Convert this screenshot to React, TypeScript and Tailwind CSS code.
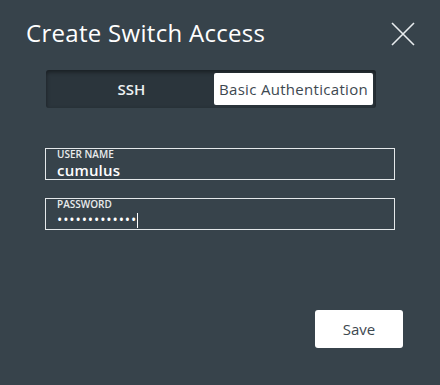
export default function App() {
  return (
    <div
      className="w-[440px] h-[385px] bg-[#37434b] text-white relative overflow-hidden"
      style={{ fontFamily: '"Open Sans", "DejaVu Sans", sans-serif' }}
    >
      {/* header */}
      <div className="flex items-start justify-between pl-[26px] pr-[25px] pt-[18px]">
        <h1 className="text-[24px] leading-[30px] font-normal tracking-[0.3px]">Create Switch Access</h1>
        <button className="w-[24px] h-[24px] mt-[4px]">
          <svg viewBox="0 0 24 24" width="24" height="24" fill="none" stroke="#e8ecee" strokeWidth="1.6">
            <path d="M1 1 L23 23 M23 1 L1 23" />
          </svg>
        </button>
      </div>

      {/* auth type toggle */}
      <div className="ml-[46px] mt-[22px] w-[330px] h-[38px] rounded-[3px] bg-[#2b353c] shadow-[inset_0_2px_4px_rgba(0,0,0,0.45)] flex items-center p-[3px]">
        <button className="flex-1 h-full text-[15px] font-semibold text-[#eef1f2]">SSH</button>
        <button className="w-[159px] h-full bg-white rounded-[2px] text-[15px] tracking-[0.3px] text-[#3d4850]">
          Basic Authentication
        </button>
      </div>

      {/* fields */}
      <div className="ml-[45px] mt-[40px] w-[350px] flex flex-col gap-[18px]">
        <div className="h-[32px] border-[1.5px] border-[#e4e8ea] px-[11px] flex flex-col gap-[4px]">
          <div className="text-[10px] leading-[10px] font-semibold text-[#e9eced]">USER NAME</div>
          <div className="text-[15px] leading-[14px] font-semibold tracking-[0.2px]">cumulus</div>
        </div>
        <div className="h-[32px] border-[1.5px] border-[#e4e8ea] px-[11px] flex flex-col gap-[4px]">
          <div className="text-[10px] leading-[10px] font-semibold text-[#e9eced]">PASSWORD</div>
          <div className="flex items-center h-[14px]">
            <span className="text-[14px] leading-[14px] tracking-[0.9px]">•••••••••••••</span>
            <span className="w-px h-[15px] bg-white" />
          </div>
        </div>
      </div>

      {/* footer */}
      <div className="absolute right-[37px] bottom-[37px]">
        <button className="w-[88px] h-[38px] bg-white rounded-[3px] text-[15px] text-[#3d4850]">Save</button>
      </div>
    </div>
  )
}
